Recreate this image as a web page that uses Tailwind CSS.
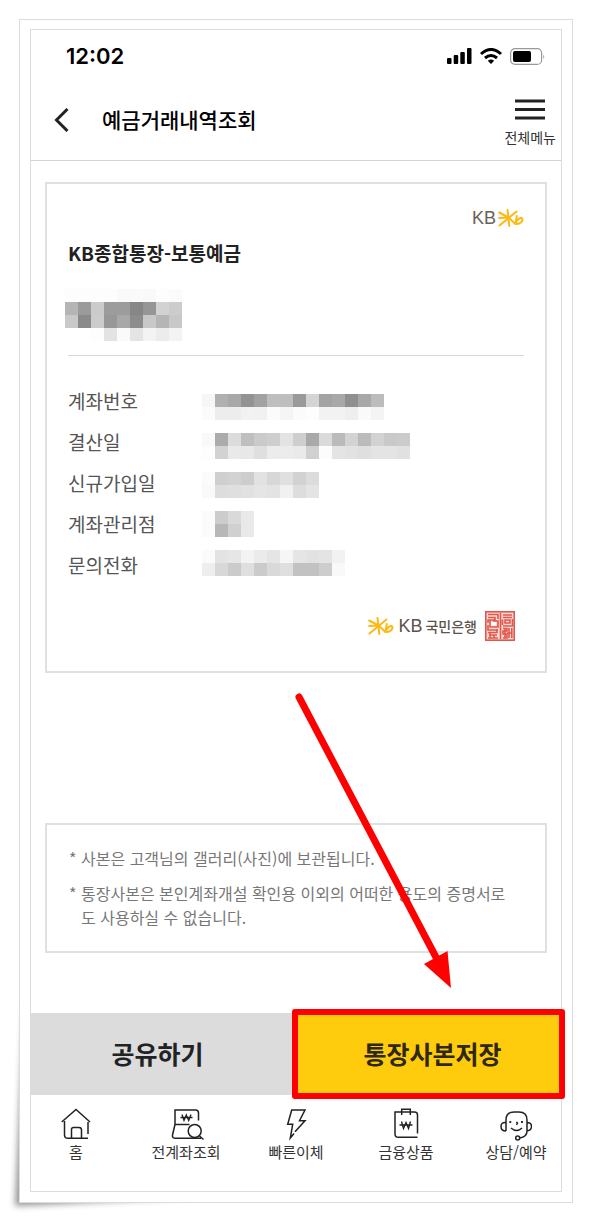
<!DOCTYPE html>
<html lang="ko">
<head>
  <meta charset="UTF-8" />
  <meta name="viewport" content="width=device-width, initial-scale=1.0" />
  <title>예금거래내역조회</title>
  <script src="https://cdn.jsdelivr.net/npm/@tailwindcss/browser@4"></script>
</head>
<body class="bg-white p-[19px] font-['Noto_Sans_CJK_KR',sans-serif] text-[#222]">
  <!-- 공용 로고 심볼 -->
  <svg class="hidden">
    <symbol id="kb-star" viewBox="0 0 26 18">
      <g fill="none" stroke="#fdb913" stroke-width="2" stroke-linecap="round" stroke-linejoin="round">
        <path d="M9.500 1L11.300 17" />
        <path d="M1.200 3.500L10.500 8.500" />
        <path d="M1.200 9L10.500 8.500L17.500 15" />
        <path d="M18.500 2.500L1.500 16.500" />
        <path d="M18.800 7L17.500 15Q21 15.500 23.500 13Q25.500 10 23.500 9Q21 8.500 18.500 12.500" />
      </g>
    </symbol>
  </svg>

  <div class="relative">
    <!-- 종이 말림 그림자 -->
    <svg class="absolute -bottom-[18px] -left-[19px] -z-10 h-[260px] w-[220px]" viewBox="0 0 220 260" fill="none">
      <defs>
        <filter id="curl" x="-20%" y="-20%" width="140%" height="140%"><feGaussianBlur stdDeviation="3" /></filter>
      </defs>
      <path d="M24 40L15 245L60 243L190 236V200H40Z" fill="#000" fill-opacity="0.42" filter="url(#curl)" />
    </svg>

    <div class="border border-[#dcdcdc] bg-white px-[10px] pt-[9px] pb-[10px]">
      <main class="border border-[#dcdcdc]">
        <!-- 상태 표시줄 -->
        <div class="flex h-[52px] items-center justify-between pr-4 pl-[35px]">
          <span class="font-[Inter,sans-serif] text-[22px] font-semibold text-black">12:02</span>
          <div class="flex items-center gap-2">
            <svg class="h-4 w-[25px]" viewBox="0 0 25 16">
              <rect x="0" y="10" width="4.500" height="6" rx="1" />
              <rect x="6.700" y="7" width="4.500" height="9" rx="1" />
              <rect x="13.300" y="4" width="4.500" height="12" rx="1" />
              <rect x="20" y="0" width="4.500" height="16" rx="1" />
            </svg>
            <svg class="h-4 w-[22px]" viewBox="0 0 22 16" fill="none" stroke="#000" stroke-width="3">
              <path d="M1 6Q11 -3 21 6" />
              <path d="M5 10Q11 5 17 10" />
              <path d="M7.800 12.700Q11 10.500 14.200 12.700L11 16Z" fill="#000" stroke="none" />
            </svg>
            <svg class="h-[17px] w-[35px]" viewBox="0 0 35 17" fill="none">
              <rect x="0.600" y="0.600" width="31" height="15.800" rx="4.500" stroke="#999" stroke-width="1.200" />
              <rect x="3" y="3" width="18" height="11" rx="2" fill="#000" />
              <path d="M33.300 6Q35 8.500 33.300 11Z" fill="#999" />
            </svg>
          </div>
        </div>

        <!-- 상단 헤더 -->
        <header class="flex h-[79px] items-center border-b border-[#d4d4d4] pr-[5px] pb-[3px] pl-[23px]">
          <button type="button" aria-label="뒤로" class="mr-[33px]">
            <svg class="h-6 w-[15px]" viewBox="0 0 15 24" fill="none" stroke="#222" stroke-width="3"><path d="M13.500 1L2.500 12L13.500 23" /></svg>
          </button>
          <h1 class="flex-1 text-[21px] font-medium text-black">예금거래내역조회</h1>
          <button type="button" class="flex flex-col items-center gap-[7px] pt-1.5">
            <svg class="h-[21px] w-[30px]" viewBox="0 0 30 21" fill="none" stroke="#222" stroke-width="3"><path d="M0 2H30M0 10.500H30M0 19H30" /></svg>
            <span class="text-[14px] leading-5 text-[#333]">전체메뉴</span>
          </button>
        </header>

        <!-- 통장사본 카드 -->
        <section class="mx-[14px] mt-[21px] border-2 border-[#e0e0e0] px-[21px] pt-[25px] pb-[30px]">
          <div class="flex h-[18px] items-center justify-end gap-[2px]">
            <span class="font-['Liberation_Sans',sans-serif] text-[18px] text-[#6b6257]">KB</span>
            <svg class="h-[18px] w-[26px]"><use href="#kb-star" /></svg>
          </div>
          <h2 class="mt-3 text-[19px] leading-7 font-bold">KB종합통장-보통예금</h2>
          <div class="mt-[22px] -ml-[3px]" data-mosaic="fdfdfdfdf9faf9fdfb b59bcb9c9c8696d2cc c98acc98a88cc8b5c8 fffffde3fae4f3ecf3"></div>
          <hr class="mt-[14px] border-[#d8d8d8]" />

          <div class="mt-6 flex">
            <ul class="w-[134px] text-[19px] leading-[41px] text-[#555]">
              <li>계좌번호</li>
              <li>결산일</li>
              <li>신규가입일</li>
              <li>계좌관리점</li>
              <li>문의전화</li>
            </ul>
            <div class="flex flex-col gap-[13px] pt-[14px]">
              <div data-mosaic="f6b0a893a2bebe9ad4a3a890a8bc fbededf2f1fbf5fbfdf2f2eefaf4"></div>
              <div data-mosaic="f9abdcbfcacee3cea9dabad3bbd2c9cb fdd2e9e8dfececead0fce4e2dfe4e4e1"></div>
              <div data-mosaic="fbcfd2cde2d7e0d2dc f9dddfe1e5e3f1dde4"></div>
              <div data-mosaic="fbccd9e9 fbb7d0e9"></div>
              <div data-mosaic="fbe3e6f3ebe5f6e5e2e4f2 eed8cbdfcbd9dfc2c2cdf9"></div>
            </div>
          </div>

          <div class="mt-[26px] flex items-center justify-end pr-[9px]">
            <svg class="mr-1 h-[18px] w-[26px]"><use href="#kb-star" /></svg>
            <span class="mr-[3px] font-['Liberation_Sans',sans-serif] text-[18px] leading-6 text-[#5c544b]">KB</span>
            <span class="mr-2 text-[14px] leading-6 font-medium text-[#5c544b]">국민은행</span>
            <!-- 직인 -->
            <svg class="size-[30px]" viewBox="0 0 30 30" fill="none" stroke="#e2574c" stroke-width="1.600">
              <rect x="0.800" y="0.800" width="28.400" height="28.400" fill="#fbdcd8" stroke-width="1.600" />
              <path d="M3 3.500H13V8M3 6.500H10V9H3V12M5 9V16H13V10H8M3 14V19H13M3 21.500H12V18M4 24H12M3 27H13M5 21V27M9 24V27" />
              <path d="M15.500 2V28M18 4H27M18 6.500H27M20 9H25V12H20ZM17.500 14V8.500M27.500 8V15H18M18 17.500H22V20H18V23H22V27H18M24 17V27M26.800 17V27M22 22H27M20 17V27" />
              <path d="M6 11H11V14.500H6Z" fill="#fff" stroke="none" />
            </svg>
          </div>
        </section>

        <!-- 유의사항 -->
        <ul class="mx-[14px] mt-[150px] flex flex-col gap-[11px] border-2 border-[#e0e0e0] pt-[21px] pb-[22px] pr-5 pl-[22px] text-[16px] leading-6 text-[#777]">
          <li class="flex"><span class="w-3 shrink-0">*</span><span>사본은 고객님의 갤러리(사진)에 보관됩니다.</span></li>
          <li class="flex"><span class="w-3 shrink-0">*</span><span>통장사본은 본인계좌개설 확인용 이외의 어떠한 용도의 증명서로<br />도 사용하실 수 없습니다.</span></li>
        </ul>

        <!-- 하단 버튼 -->
        <div class="mt-[60px] grid h-[82px] grid-cols-2 text-[25px] font-bold">
          <button type="button" class="bg-[#dcdcdc] pr-3">공유하기</button>
          <div class="relative">
            <button type="button" class="size-full bg-[#ffcc0d] pl-2 text-[#2e2812]">통장사본저장</button>
            <!-- 강조 표시와 화살표 -->
            <div class="pointer-events-none absolute -inset-1 rounded-[3px] border-6 border-[#f00]"></div>
            <svg class="pointer-events-none absolute bottom-full left-0 h-[330px] w-40 overflow-visible" viewBox="0 0 160 330">
              <path d="M3 14L142 278" stroke="#f00" stroke-width="7" stroke-linecap="round" />
              <path d="M155 305L128 281L151.500 268Z" fill="#f00" />
            </svg>
          </div>
        </div>

        <!-- 하단 내비게이션 -->
        <nav class="flex justify-between pt-[13px] pb-[29px] text-[15px] leading-5 text-[#333]">
          <a href="#" class="flex w-[90px] flex-col items-center gap-px">
            <svg class="h-[33px] w-8" viewBox="0 0 32 33" fill="none" stroke="#222" stroke-width="1.500">
              <path d="M1.700 14L16 1.500L30 14M4.500 13V27Q4.500 30.300 8 30.300H28M28 14V26M11.500 30.300V21.500Q11.500 19.500 13.500 19.500H19Q21.500 19.500 21.500 22V30.300" />
            </svg>
            <span>홈</span>
          </a>
          <a href="#" class="flex w-[90px] flex-col items-center gap-px">
            <svg class="h-[33px] w-8 overflow-visible" viewBox="0 0 32 33" fill="none" stroke="#222" stroke-width="1.500">
              <path d="M5 16.500V2H25.500Q28.500 2 28.500 5V12.500M19.500 16.500H5L2.500 27Q2 30.300 5.500 30.300H31M29.500 28L33.500 31.500" />
              <circle cx="24.700" cy="23" r="6.500" />
              <path d="M12 6.500L14 12.500L16.300 7L18.700 12.500L21 6.500M10.500 9.500H22.500" stroke-width="1.300" />
            </svg>
            <span>전계좌조회</span>
          </a>
          <a href="#" class="flex w-[90px] flex-col items-center gap-px">
            <svg class="h-[33px] w-8" viewBox="0 0 32 33" fill="none" stroke="#222" stroke-width="1.500">
              <path d="M15 23.700L25 12.700H19.500L25 2H11.700L7.700 16.300H12.700L10.300 30L14 25.500" />
            </svg>
            <span>빠른이체</span>
          </a>
          <a href="#" class="flex w-[90px] flex-col items-center gap-px">
            <svg class="h-[33px] w-8" viewBox="0 0 32 33" fill="none" stroke="#222" stroke-width="1.500">
              <path d="M11.700 4H5V26Q5 29.300 8.300 29.300H27.500M20.300 4H24.500Q27.500 4 27.500 7V25.500M11.700 7V1.300H20.300V7M11.700 4H20.300" />
              <path d="M11.500 13.500L13.500 20.500L16 14.500L18.500 20.500L20.500 13.500M9.500 17H22.500" stroke-width="1.400" />
            </svg>
            <span>금융상품</span>
          </a>
          <a href="#" class="flex w-[90px] flex-col items-center gap-px">
            <svg class="h-[33px] w-8" viewBox="0 0 32 33" fill="none" stroke="#222" stroke-width="1.500">
              <path d="M6 23V12Q6 4 14 4H19Q27 4 27 12V23Q27 29 19.700 30M6 14.500Q1 14 1 18.500T6 23M27 14.500Q31.500 14.500 31.500 18.500T27 23" />
              <circle cx="17.700" cy="30" r="2" />
              <path d="M11 20Q16.500 25 22 20M16.300 14L17.500 15L16.500 17" />
              <path d="M10.300 13V15M22 13V15" stroke-width="1.800" />
            </svg>
            <span>상담/예약</span>
          </a>
        </nav>
      </main>
    </div>
  </div>

  <script>
    // 개인정보 모자이크: 두 자리 16진수 = 한 칸의 회색 밝기
    document.querySelectorAll('[data-mosaic]').forEach((box) => {
      box.dataset.mosaic.split(' ').forEach((line) => {
        const row = document.createElement('div');
        row.className = 'flex';
        line.match(/../g).forEach((v) => {
          const cell = document.createElement('span');
          cell.className = 'block size-[13px]';
          cell.style.backgroundColor = '#' + v + v + v;
          row.appendChild(cell);
        });
        box.appendChild(row);
      });
    });
  </script>
</body>
</html>
